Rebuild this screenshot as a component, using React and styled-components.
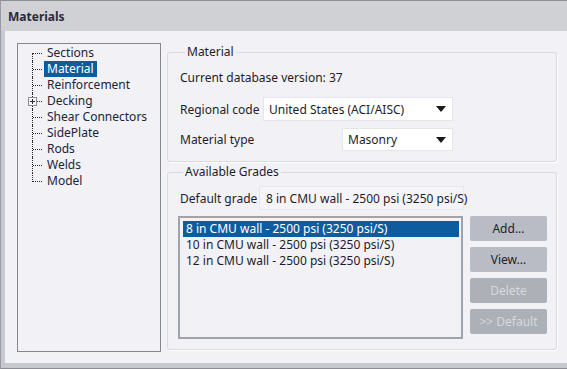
import React from "react";
import styled, { createGlobalStyle } from "styled-components";

const GlobalStyle = createGlobalStyle`
  html, body {
    margin: 0;
    padding: 0;
    background: #cacbd0;
  }
  * {
    box-sizing: border-box;
  }
  body {
    font-family: "Noto Sans", "Open Sans", sans-serif;
    font-size: 12px;
    color: #1d1d28;
  }
`;

const Window = styled.div`
  width: 567px;
  height: 369px;
  display: flex;
  flex-direction: column;
  background: #c8c9ce;
  border-top: 1px solid #8d8d95;
  border-left: 1px solid #9a9aa2;
  border-bottom: 1px solid #8d8d95;
`;

const TitleBar = styled.div`
  height: 30px;
  flex: none;
  display: flex;
  align-items: center;
  padding-left: 7px;
  background: #d0d1d5;
  font-weight: bold;
  color: #2a2b3a;
`;

const Body = styled.div`
  height: 332px;
  flex: none;
  margin-left: 4px;
  display: flex;
  gap: 6px;
  padding: 12px 10px 0 12px;
  background: #f1f1f6;
`;

const TreePanel = styled.div`
  width: 144px;
  height: 309px;
  flex: none;
  border: 1px solid #86868e;
  padding-top: 1px;
`;

const TreeRow = styled.div`
  height: 16px;
  display: flex;
  align-items: center;
`;

const Connector = styled.span`
  position: relative;
  width: 26px;
  height: 16px;
  flex: none;

  &::before {
    content: "";
    position: absolute;
    left: 14px;
    top: ${(p) => (p.$first ? "8px" : "0")};
    bottom: ${(p) => (p.$last ? "7px" : "0")};
    border-left: 1px dotted #2b2b30;
  }

  &::after {
    content: "";
    position: absolute;
    left: 15px;
    top: 8px;
    width: 9px;
    border-top: 1px dotted #2b2b30;
  }
`;

const Expander = styled.svg`
  position: absolute;
  left: 10px;
  top: 4px;
  z-index: 1;
`;

const TreeLabel = styled.span`
  height: 16px;
  line-height: 16px;
  padding: 0 3px;
  white-space: nowrap;
  background: ${(p) => (p.$selected ? "#0c5c9f" : "transparent")};
  color: ${(p) => (p.$selected ? "#ffffff" : "#23233a")};
`;

const RightColumn = styled.div`
  flex: 1;
  display: flex;
  flex-direction: column;
  gap: 2px;
  margin-top: 1px;
`;

const Group = styled.fieldset`
  margin: 0;
  min-width: 0;
  padding: ${(p) => p.$pad};
  border: 1px solid #d5dbe0;
  border-radius: 3px;
  box-shadow: 1px 1px 0 #ffffff;
`;

const Legend = styled.legend`
  margin-left: 5px;
  padding: 0 2px;
  height: 16px;
  line-height: 16px;
  color: #1d1d28;
`;

const InfoLine = styled.div`
  height: 16px;
  line-height: 16px;
`;

const FieldRow = styled.div`
  width: 273px;
  display: flex;
  align-items: center;
  justify-content: space-between;
  margin-top: ${(p) => p.$top}px;
`;

const Select = styled.div`
  width: ${(p) => p.$width}px;
  height: ${(p) => p.$height}px;
  display: flex;
  align-items: center;
  justify-content: space-between;
  padding: 0 6px 0 5px;
  background: #ffffff;
  border: 1px solid #e4e4ea;
  white-space: nowrap;
`;

const Arrow = styled.span`
  width: 0;
  height: 0;
  border-left: 5px solid transparent;
  border-right: 5px solid transparent;
  border-top: 6px solid #1a1a1a;
`;

const DefaultRow = styled.div`
  display: flex;
  align-items: center;
  padding-left: 2px;
`;

const DefaultLabel = styled.span`
  width: 79px;
  flex: none;
`;

const ReadOnlyBox = styled.div`
  width: 205px;
  height: 24px;
  display: flex;
  align-items: center;
  padding-left: 6px;
  background: #f5f5f9;
  border: 1px solid #e6e6eb;
  white-space: nowrap;
`;

const ListArea = styled.div`
  display: flex;
  gap: 7px;
  margin-top: 6px;
`;

const ListBox = styled.div`
  width: 285px;
  height: 123px;
  padding: 3px 2px 3px 3px;
  border: 2px solid #a0a3ab;
`;

const ListItem = styled.div`
  height: 16px;
  line-height: 16px;
  padding-left: 3px;
  white-space: nowrap;
  background: ${(p) => (p.$selected ? "#0c5c9f" : "transparent")};
  color: ${(p) => (p.$selected ? "#ffffff" : "#1d1d28")};
`;

const ButtonColumn = styled.div`
  display: flex;
  flex-direction: column;
  gap: 6px;
`;

const Button = styled.button`
  width: 77px;
  height: 25px;
  padding: 0;
  border: none;
  border-radius: 2px;
  font: inherit;
  background: ${(p) => (p.disabled ? "#adb0b7" : "#b9bcc5")};
  color: ${(p) => (p.disabled ? "#d7d9de" : "#1d1d2c")};
`;

const treeItems = [
  "Sections",
  "Material",
  "Reinforcement",
  "Decking",
  "Shear Connectors",
  "SidePlate",
  "Rods",
  "Welds",
  "Model",
];

const grades = [
  "8 in CMU wall - 2500 psi (3250 psi/S)",
  "10 in CMU wall - 2500 psi (3250 psi/S)",
  "12 in CMU wall - 2500 psi (3250 psi/S)",
];

function PlusBox() {
  return (
    <Expander width="9" height="9" viewBox="0 0 9 9">
      <rect x="0.5" y="0.5" width="8" height="8" fill="#f7f7fa" stroke="#8c8c94" />
      <path d="M2 4.5h5M4.5 2v5" stroke="#2b2b33" strokeWidth="1" />
    </Expander>
  );
}

export default function App() {
  return (
    <>
      <GlobalStyle />
      <Window>
        <TitleBar>Materials</TitleBar>
        <Body>
          <TreePanel>
            {treeItems.map((item, i) => (
              <TreeRow key={item}>
                <Connector $first={i === 0} $last={i === treeItems.length - 1}>
                  {item === "Decking" && <PlusBox />}
                </Connector>
                <TreeLabel $selected={item === "Material"}>{item}</TreeLabel>
              </TreeRow>
            ))}
          </TreePanel>
          <RightColumn>
            <Group $pad="10px 0 10px 12px">
              <Legend>Material</Legend>
              <InfoLine>Current database version: 37</InfoLine>
              <FieldRow $top={11}>
                <span>Regional code</span>
                <Select $width={190} $height={24}>
                  <span>United States (ACI/AISC)</span>
                  <Arrow />
                </Select>
              </FieldRow>
              <FieldRow $top={7}>
                <span>Material type</span>
                <Select $width={111} $height={23}>
                  <span>Masonry</span>
                  <Arrow />
                </Select>
              </FieldRow>
            </Group>
            <Group $pad="6px 0 10px 10px">
              <Legend>Available Grades</Legend>
              <DefaultRow>
                <DefaultLabel>Default grade</DefaultLabel>
                <ReadOnlyBox>{grades[0]}</ReadOnlyBox>
              </DefaultRow>
              <ListArea>
                <ListBox>
                  {grades.map((g, i) => (
                    <ListItem key={g} $selected={i === 0}>
                      {g}
                    </ListItem>
                  ))}
                </ListBox>
                <ButtonColumn>
                  <Button>Add...</Button>
                  <Button>View...</Button>
                  <Button disabled>Delete</Button>
                  <Button disabled>&gt;&gt; Default</Button>
                </ButtonColumn>
              </ListArea>
            </Group>
          </RightColumn>
        </Body>
      </Window>
    </>
  );
}
